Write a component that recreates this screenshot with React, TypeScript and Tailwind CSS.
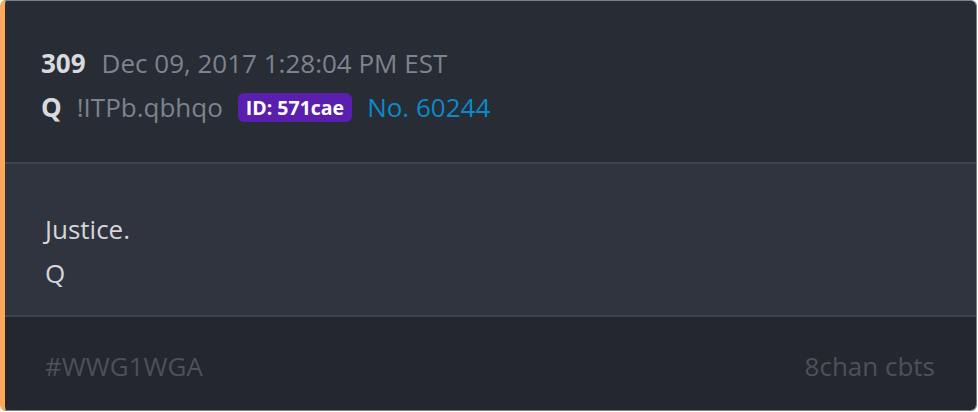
export default function App() {
  return (
    <div className="w-[978px] h-[412px] bg-white font-['Open_Sans',sans-serif]">
      <div className="flex flex-col w-[977px] h-[411px] rounded-[6px] border border-[#7a7f88] border-l-[5px] border-l-[#ffa85a] overflow-hidden">
        <div className="h-[161px] bg-[#282c35] pl-[36px] pt-[44px] flex flex-col gap-[8px]">
          <div className="flex items-center gap-[16px] text-[26px] leading-[36px]">
            <span className="font-bold text-[#d9dadd]">309</span>
            <span className="text-[#7e838d]">Dec 09, 2017 1:28:04 PM EST</span>
          </div>
          <div className="flex items-center gap-[15px] text-[26px] leading-[36px]">
            <span className="font-bold text-[#d9dadd]">Q</span>
            <span className="text-[#7e838d]">!ITPb.qbhqo</span>
            <span className="rounded-[6px] bg-[#5b1fb0] px-[8px] text-[19.5px] leading-[29px] font-bold text-white">ID: 571cae</span>
            <span className="text-[#0b8ac9]">No. 60244</span>
          </div>
        </div>
        <div className="h-[2px] bg-[#3e434c]" />
        <div className="h-[151px] bg-[#2f343e] pl-[40px] pt-[43px] text-[26px] leading-[44px] text-[#d4d6da]">
          <p>Justice.</p>
          <p>Q</p>
        </div>
        <div className="h-[2px] bg-[#3e434c]" />
        <div className="flex-1 bg-[#24272e] pl-[40px] pr-[41px] pt-[5px] flex items-center justify-between text-[26px] text-[#4c515a]">
          <span>#WWG1WGA</span>
          <span>8chan cbts</span>
        </div>
      </div>
    </div>
  );
}
